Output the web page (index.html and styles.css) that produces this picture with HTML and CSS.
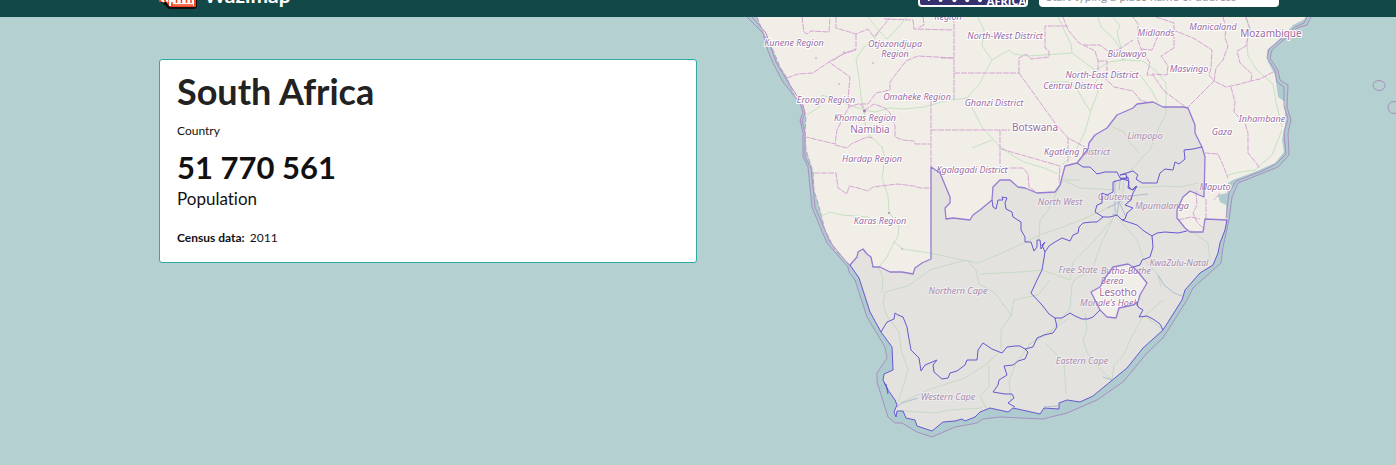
FILE: index.html
```html
<!DOCTYPE html>
<html lang="en">
<head>
<meta charset="utf-8">
<title>South Africa - Wazimap</title>
<link rel="stylesheet" href="styles.css">
</head>
<body>
<header class="topbar">
  <a class="brand" href="#">
    <svg class="brand-mark" width="38" height="30" viewBox="0 0 38 30" aria-hidden="true">
      <path d="M0 0H38V28L36 30H10L0 21Z" fill="#111"/>
      <path d="M0 0H37V28H11L7 23H0Z" fill="#f4431c"/>
      <path d="M2 20l3 3M6 18l3 5" stroke="#fff" stroke-width="2"/>
      <path d="M10 27V21l3-3 3 1v-3h5v-3h14v14Z" fill="#fff"/>
      <path d="M13 27v-4M17.500 24v-8M22.500 24v-8M27.500 24v-8M32 24v-8M12 26h22" stroke="#f4431c" stroke-width="1.500"/>
    </svg>
    <span class="brand-name">Wazimap</span>
  </a>
  <div class="tools">
    <a class="partner" href="#" aria-label="Code for Africa">
      <svg class="dots" width="68" height="12" viewBox="0 0 68 12" aria-hidden="true">
        <g fill="#fff"><rect x="8" y="3" width="2" height="5"/><circle cx="21" cy="7" r="2"/><circle cx="35" cy="7" r="2.200"/><circle cx="48" cy="7" r="2.200"/><circle cx="61" cy="7" r="2.200"/></g>
      </svg>
      <span>AFRICA</span>
    </a>
    <input class="search" type="search" aria-label="Find a place" placeholder="Start typing a place name or address">
  </div>
</header>
<main class="hero">
  <div class="summary">
    <section class="card">
      <h1>South Africa</h1>
      <p class="level">Country</p>
      <p class="figure">51 770 561</p>
      <p class="caption">Population</p>
      <p class="source"><strong>Census data:</strong> 2011</p>
    </section>
  </div>
  <svg class="map" viewBox="698 17 698 448" role="img" aria-label="Map of South Africa and its provinces">
    <path class="shelf" d="M747 17L763 33 773 63 783 82 800 103 803 112 800 120 803 133 803 157 808 167 812 207 816 217 827 243 848 267 855 280 867 317 885 347 887 358 877 373 877 382 888 417 895 423 902 423 917 432 932 437 955 427 977 423 983 419 1000 417 1043 419 1067 413 1097 400 1123 382 1147 353 1163 338 1187 300 1193 288 1213 270 1221 263 1223 247 1229 220 1232 197 1238 183 1263 173 1278 167 1289 155 1288 133 1291 120 1287 107 1288 85 1280 80 1278 70 1270 58 1272 50 1287 37 1297 28 1307 25 1311 17Z"/>
    <path class="land" d="M757 17L763 32 773 50 780 67 787 78 795 97 803 107 806 117 805 133 806 150 813 172 814 190 820 210 825 230 835 250 850 265 859 278 870 312 881 332 892 347 893 370 884 374 883 380 888 390 895 400 897 405 894 412 896 417 897 411 903 411 906 418 915 420 917 426 932 431 943 422 955 421 962 419 965 421 975 417 980 412 990 408 1008 412 1013 408 1040 414 1044 408 1059 409 1059 403 1067 400 1080 402 1093 396 1110 382 1127 368 1143 348 1163 330 1182 300 1185 290 1200 273 1213 265 1218 253 1220 243 1225 230 1227 220 1226 205 1220 202 1218 195 1227 193 1228 183 1233 180 1257 171 1275 163 1284 152 1282 140 1285 125 1285 102 1278 97 1275 75 1268 62 1267 50 1273 45 1287 32 1293 25 1303 20 1306 17Z"/>
    <g class="limit">
      <path d="M747 17L763 33 768 51 773 63 783 82 800 103 803 112 800 120 803 133 803 157 808 167 812 207 816 217 827 243 848 267 849 272 855 280 867 317 885 347 887 358 877 373 877 382 888 417 895 423 902 423 917 432 932 437 955 427 977 423 983 419 1000 417 1043 419 1067 413 1097 400 1123 382 1147 353 1163 338 1187 300 1193 288 1213 270 1221 263 1223 247 1229 220 1232 197 1238 183 1263 173 1278 167 1289 155 1288 133 1291 120 1287 107 1288 85 1280 80 1278 70 1270 58 1272 50 1287 37 1297 28 1307 25 1311 17"/>
      <path d="M752 17L766 33 776 62 788 82 803 105 805 113 802 121 805 133 805 157 811 168 815 207 820 219 830 242 850 266"/>
      <path d="M1226 218L1229 193 1236 181 1262 171 1276 164 1286 154 1284 133 1288 119 1284 106 1284 87 1277 82 1275 70 1267 58 1269 49 1286 35 1295 27 1304 23 1307 17"/>
      <ellipse cx="1379" cy="85.500" rx="6" ry="5"/><circle cx="1394" cy="107.500" r="6"/>
    </g>
    <g class="coast">
      <path d="M757 17L763 32 773 50 780 67 787 78 795 97 803 107 806 117 805 133 806 150 813 172 814 190 820 210 825 230 835 250 850 265"/>
    </g>
    <path class="road" d="M868 17L879 31 874 40 864 47 856 59 859 78 861 97 864 110 866 132 882 147 885 158 882 178 888 196 889 212 899 226 898 237 894 242 887 257 879 267M907 17L895 31 887 39 879 31M864 110L875 112 889 108 904 109 924 107 945 101 967 98 980 83 986 71 992 60 1009 50 1014 54 1029 56 1072 53 1080 59 1095 70 1096 79 1098 92 1091 110 1085 132 1075 152 1062 165M992 60L982 46 984 30 978 17M967 98L982 127 998 145 1012 155 1024 162 1044 168 1058 174M972 148L992 140M807 115L819 107 822 95 864 110M821 216L830 212 842 215 868 217 880 225M894 242L903 249 930 253 953 258 978 263 1000 254 1040 235 1076 222 1115 205M1058 17L1064 30 1071 44 1072 53M1113 17L1120 26 1117 32 1124 60 1109 62 1096 70M1098 17L1101 27 1113 38 1120 48 1123 60 1143 61 1155 70 1166 83 1166 113 1158 130 1150 150 1141 159 1124 178 1122 205M1140 75L1152 91 1158 103M1050 82L1068 82 1077 89 1085 103 1091 112M1111 126L1124 132 1128 140 1139 153M1245 17L1250 30 1247 42 1248 56 1257 70 1273 84 1276 102 1282 127M1117 210L1101 244 1092 270 1075 279 1072 285 1070 308M1117 213L1095 240 1073 262 1070 280 1042 270 1020 272 980 274M1115 215L1137 240 1143 258 1158 275 1161 287M1085 313L1087 330 1083 340 1087 352 1096 365 1112 380M1163 300L1142 318 1130 340 1124 355 1114 365 1112 380M1070 308L1050 333 1030 344 1015 365 1009 381 1011 402M1068 319L1028 345M1001 349L1001 330 1011 315 1014 300 1038 295 1050 280M1012 316L995 293 979 284 976 270 967 260 951 264 930 270 908 286 885 292 883 304 887 316 899 332 901 350 908 370 901 393 897 405M900 403L930 389 965 378 985 365 1000 352M903 411L935 413 950 410 982 408M989 365L989 387 980 396 986 408M1045 343L1064 362 1066 394M879 268L883 278 882 292M1080 180L1063 180 1048 210 1040 220 1039 240M1063 180L1080 188 1115 190M1128 188L1165 186 1180 187 1198 183M1228 175L1240 172 1255 170 1272 155 1282 130M1190 230L1208 243 1210 260M1163 330L1145 316"/>
    <path class="motorway" d="M1114 193L1119 202 1117 215 1112 214M1119 202L1130 196 1148 194M1119 190L1120 181 1124 177M1119 202L1107 208M1119 202L1126 217M1115 180V212M1158 275L1164 285 1174 293 1182 296M897 407L902 403 918 398M1044 407L1058 406M1103 377L1112 380"/>
    <g class="region">
      <path d="M802 17L804 32 807 34 811 31 829 32 830 18M836 17L836 28 856 34 868 29 874 37 890 18M856 34L856 49 845 53 832 61M787 78L798 74 813 73 829 62 850 77 848 100 849 107M829 62L843 54 856 50M884 19L913 20 914 29 953 30M923 17L924 25 918 28M953 58L918 56 906 61 899 70 890 82 890 90 876 93 868 104 858 104 849 107 843 118 837 130 835 144 806 137M860 104L865 110 874 104 885 108 890 113 895 126 895 137 903 140 914 141 915 144 931 144M835 145L847 148 851 144 867 137 873 138M814 173H836L838 188 847 194 849 186 858 188 868 191 873 187 897 184 914 186 920 188 931 188M954 17V101M931 101V167M931 130H1010M954 73H1019M954 58H940M1019 73V58L1026 54 1031 59 1049 57V51L1045 48V26H1068M1019 73L1055 123 1068 138 1085 147M1063 17L1068 30 1079 43 1095 51 1098 61 1098 72 1110 83 1114 87 1133 91 1140 100 1147 102M1000 130V168H1023L1028 174 1029 187 1037 193M1001 149L1060 166 1059 183M1068 138V162M1083 45L1100 45 1108 51 1118 50M1098 61H1107V78M1156 17L1174 23V33L1171 35 1175 31 1181 33 1195 39 1212 50 1211 68 1209 75 1214 81 1187 108 1164 91 1153 75 1147 75 1150 63 1141 49 1138 40 1138 24 1133 17M1223 17L1226 28 1225 38 1228 46 1223 60 1216 68 1214 81 1226 87 1240 84 1251 81 1260 79 1275 71M1246 17L1250 28 1246 46 1237 51 1240 63 1252 74 1251 81M1231 87L1235 102 1234 112 1245 123 1248 133 1248 153 1257 164 1259 168M1174 33L1174 48 1161 56 1168 66 1167 75 1152 74M1118 50L1133 40M1141 49L1152 50 1158 36M1205 153L1218 154 1223 165 1228 178M1196 191L1197 205 1193 213 1197 222 1205 230M1206 199L1206 219M1178 220L1191 217 1200 219M1220 193L1214 200"/>
      <g class="town"><circle cx="864.500" cy="111" r="1.500"/><circle cx="839" cy="84" r=".7"/><circle cx="816" cy="58" r=".7"/><circle cx="844" cy="52" r=".7"/><circle cx="873" cy="63" r=".7"/><circle cx="889" cy="213" r="1"/><circle cx="902" cy="249" r=".7"/></g>
    </g>
    <g class="names">
      <text x="794" y="46">Kunene Region</text><text x="895" y="47">Otjozondjupa</text><text x="895" y="57">Region</text>
      <text x="948" y="20">Region</text><text x="826" y="103">Erongo Region</text><text x="917" y="100">Omaheke Region</text>
      <text x="865" y="121">Khomas Region</text><text x="872" y="162">Hardap Region</text><text x="880" y="224">Karas Region</text>
      <text x="1005" y="39">North-West District</text><text x="1127" y="57">Bulawayo</text><text x="1156" y="36">Midlands</text>
      <text x="1213" y="30">Manicaland</text><text x="1189" y="72">Masvingo</text><text x="1102" y="78">North-East District</text>
      <text x="1073" y="89">Central District</text><text x="994" y="106">Ghanzi District</text><text x="1077" y="155">Kgatleng District</text>
      <text x="972" y="173">Kgalagadi District</text><text x="1262" y="122">Inhambane</text><text x="1222" y="135">Gaza</text><text x="1215" y="190">Maputo</text>
      <text x="1145" y="139">Limpopo</text><text x="1060" y="205">North West</text><text x="1115" y="200">Gauteng</text>
      <text x="1162" y="209">Mpumalanga</text><text x="1179" y="266">KwaZulu-Natal</text><text x="1078" y="273">Free State</text>
      <text x="1126" y="274">Butha-Buthe</text><text x="1112" y="284">Berea</text><text x="1109" y="306">Mohale's Hoek</text>
      <text x="958" y="294">Northern Cape</text><text x="1082" y="364">Eastern Cape</text><text x="948" y="400">Western Cape</text>
      <g class="nation"><text x="870" y="133">Namibia</text><text x="1035" y="131">Botswana</text><text x="1271" y="37">Mozambique</text><text x="1118" y="296">Lesotho</text></g>
    </g>
    <g class="country">
      <path class="tint" fill-rule="evenodd" d="M850 265L857 257 858 252 863 249 867 254 871 257 873 267 880 267 890 272 902 272 913 274 915 268 922 263 931 259V167L940 173 945 185 950 197 950 203 945 208 946 219 953 218 970 220 973 215 980 210 992 200 993 187 1000 180 1010 180 1018 187 1025 188 1037 193 1055 192 1060 185 1065 166 1077 163 1088 149 1089 143 1095 135 1107 128 1117 115 1133 108 1137 104 1153 102 1163 107 1183 107 1188 108 1195 125 1195 133 1202 147 1205 157 1204 197 1190 191 1183 197 1177 210 1177 218 1185 228 1190 232 1203 232 1205 219 1227 220 1225 230 1220 243 1218 253 1213 265 1200 273 1185 290 1182 300 1163 330 1143 348 1127 368 1110 382 1093 396 1080 402 1067 400 1059 403 1059 409 1044 408 1040 414 1013 408 1008 412 990 408 980 412 975 417 965 421 962 419 955 421 943 422 932 431 917 426 915 420 906 418 903 411 897 411 896 417 894 412 897 405 895 400 888 390 883 380 884 374 893 370 892 347 881 332 870 312 859 278ZM1133 267L1128 264 1113 267 1105 278 1100 287 1091 292 1095 300 1100 310 1107 317 1116 318 1119 308 1133 305 1138 302 1140 295 1147 283 1138 272Z"/>
      <path class="border" d="M850 265L857 257 858 252 863 249 867 254 871 257 873 267 880 267 890 272 902 272 913 274 915 268 922 263 931 259V167L940 173 945 185 950 197 950 203 945 208 946 219 953 218 970 220 973 215 980 210 992 200 993 187 1000 180 1010 180 1018 187 1025 188 1037 193 1055 192 1060 185 1065 166 1077 163 1088 149 1089 143 1095 135 1107 128 1117 115 1133 108 1137 104 1153 102 1163 107 1183 107 1188 108 1195 125 1195 133 1202 147 1205 157 1204 197 1190 191 1183 197 1177 210 1177 218 1185 228 1190 232 1203 232 1205 219 1227 220M1133 267L1128 264 1113 267 1105 278 1100 287 1091 292 1095 300 1100 310 1107 317 1116 318 1119 308 1133 305 1138 302 1140 295 1147 283 1138 272Z"/>
      <path class="province" d="M850 265L859 278 870 312 881 332 892 347 893 370 884 374 883 380 888 390 884 382M886 384L888 394M888 390L895 400 897 405 894 412 896 417 897 411 903 411 906 418 915 420 917 426 932 431 943 422 955 421 962 419 965 421 975 417 980 412 990 408 1008 412 1013 408 1040 414 1044 408 1059 409 1059 403 1067 400 1080 402 1093 396 1110 382 1127 368 1143 348 1163 330 1182 300 1185 290 1200 273 1213 265 1218 253 1220 243 1225 230 1227 220"/>
      <path class="province" d="M992 200L993 207 996 209 998 200 1003 200 1002 197 1007 198 1005 203 1006 209 1012 212 1013 217 1021 222 1021 230 1025 237 1025 242 1031 242 1034 251 1037 247 1037 240 1040 240 1041 249 1045 242 1042 245 1045 252 1042 270 1037 280 1031 293 1042 305 1049 314 1055 318M1045 252L1049 246 1055 242 1062 238 1070 241 1073 235 1078 233 1079 227 1083 223 1092 222 1097 222 1103 217 1095 212 1097 205 1102 203 1102 193 1107 195 1113 192 1113 182 1120 180 1128 177 1129 187 1132 190 1137 186 1133 193 1131 200 1125 205 1133 208 1127 213 1125 219 1122 220 1117 215 1110 217 1103 217M1077 163L1083 167 1090 167 1097 174 1105 172 1117 172 1120 178 1127 179 1126 174 1120 175 1133 171 1138 175 1136 179 1142 183 1157 183 1160 173 1165 169 1173 170 1175 162 1179 164 1185 159 1184 150 1193 149 1202 147M1120 178L1129 181 1128 188 1133 190 1136 186M1122 220L1128 222 1137 225 1144 231 1152 236 1157 233 1165 232 1178 233 1187 231M1152 236L1153 247 1150 257 1142 260 1140 265 1133 267M1055 318L1062 318 1070 313 1075 316 1082 319 1088 319 1093 317 1100 310M1137 302L1138 307 1143 310 1139 317 1147 316 1153 319 1160 324 1163 330M1055 318L1057 327 1053 333 1044 335 1037 338 1033 347 1025 349 1020 346 1015 346 1007 347 1002 353 992 349 983 343 978 350 977 360 967 360 965 365 957 371 950 373 948 378 942 379 934 372 933 365 937 360 925 365 921 371 919 358 911 350 909 339 907 327 903 317 898 315 895 313 894 319 887 322 881 332M1025 349L1028 352 1025 359 1018 361 1013 365 1004 366 1007 375 999 380 998 385 993 392 1005 394 1012 394 1014 398 1008 403 1015 407"/>
    </g>
  </svg>
</main>
</body>
</html>
```
FILE: styles.css
```css
* { box-sizing: border-box; }

body {
  margin: 0;
  min-height: 100vh;
  display: flex;
  flex-direction: column;
  background: #b5d0d0;
  color: #111;
  font-family: Lato, sans-serif;
  font-variant-ligatures: none;
}

.topbar {
  display: flex;
  justify-content: space-between;
  align-items: flex-end;
  height: 17px;
  padding: 0 117px 0 159px;
  overflow: hidden;
  background: #124847;
}

.brand {
  display: flex;
  align-items: flex-end;
  gap: 7px;
  padding-bottom: 8px;
  color: #fff;
  font-size: 21px;
  font-weight: 700;
  line-height: 26px;
  text-decoration: none;
}

.brand-name { padding-bottom: 1px; }

.tools {
  display: flex;
  align-items: flex-end;
  gap: 11px;
  padding-bottom: 10px;
}

.partner {
  display: flex;
  align-items: flex-end;
  width: 110px;
  height: 36px;
  border: 2px solid #fff;
  border-radius: 4px;
  background: #35316f;
  color: #fff;
  font: 700 11px/9px "Open Sans", sans-serif;
  text-decoration: none;
}

.search {
  width: 240px;
  height: 30px;
  padding: 8px 7px 0;
  border: 0;
  border-radius: 4px;
  background: #fff;
  font: 12px/20px Lato, sans-serif;
}

.search::placeholder { color: #999; }

.hero {
  display: grid;
  grid-template-columns: 1fr 1fr;
  align-items: start;
  flex: 1;
}

.summary { padding: 42px 1px 0 159px; }

.card {
  padding: 8px 17px 14px;
  border: 1px solid #2fa9a4;
  border-radius: 3px;
  background: #fff;
}

.card h1 {
  margin: 0;
  color: #222;
  font-size: 36px;
  line-height: 46px;
}

.card p { margin: 0; }

.card .level {
  padding-top: 7px;
  font-size: 12px;
  line-height: 20px;
}

.card .figure {
  padding-top: 6px;
  font-size: 31px;
  font-weight: 700;
  line-height: 40px;
}

.card .caption {
  font-size: 17px;
  line-height: 24px;
}

.card .source {
  padding-top: 17px;
  font-size: 12px;
  line-height: 20px;
}

.source strong { margin-right: 2px; }

.map {
  display: block;
  width: 100%;
  height: auto;
}

.map path { stroke-linejoin: round; }

.shelf { fill: #aecbd0; }
.land { fill: #f1eee8; }

.limit {
  fill: none;
  stroke: #a98fc0;
  stroke-width: 1;
}

.coast {
  fill: none;
  stroke: #c39bcb;
  stroke-dasharray: 5 2;
}

.road {
  fill: none;
  stroke: #c5e1c2;
  stroke-width: 1;
}

.motorway {
  fill: none;
  stroke: #9fb6d2;
  stroke-width: 1;
}

.region path {
  fill: none;
  stroke: #d6a5d3;
  stroke-width: 1;
  stroke-dasharray: 6 1;
}

.town { fill: #a884ba; }

.names {
  fill: #9a6a9f;
  stroke: #fff;
  stroke-width: 2;
  stroke-linejoin: round;
  paint-order: stroke;
  font: italic 9px "Noto Sans", sans-serif;
  text-anchor: middle;
}

.nation {
  font-size: 10px;
  font-style: normal;
}

.tint {
  fill: #ccc;
  fill-opacity: 0.35;
}

.border {
  fill: none;
  stroke: #967bd2;
  stroke-width: 1.3;
}

.province {
  fill: none;
  stroke: #6658d0;
  stroke-width: 1;
}
```
